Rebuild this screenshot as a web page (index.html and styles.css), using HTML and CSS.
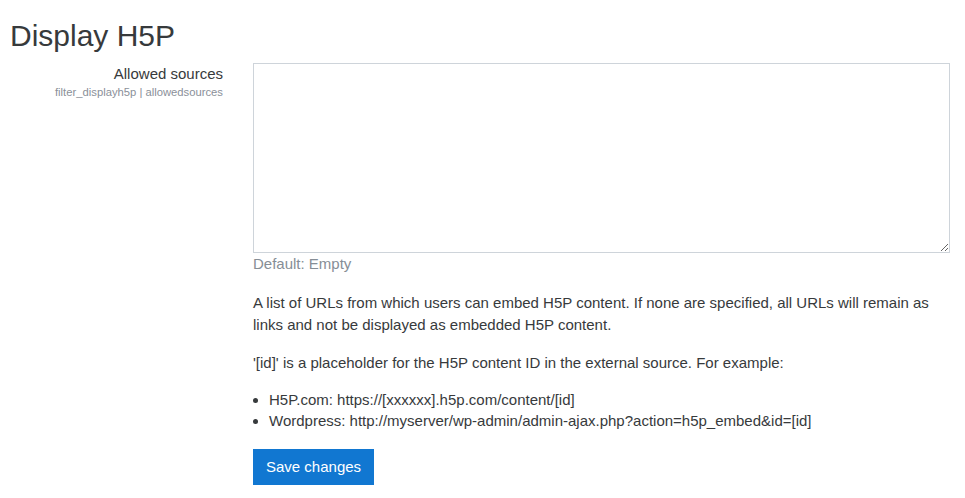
FILE: index.html
```html
<!DOCTYPE html>
<html>
  <head>
    <meta name="viewport" content="width=device-width, initial-scale=1.0">
    <title>Display H5P</title>
    <link rel="stylesheet" href="styles.css">
  </head>
  <body>
    <div class="page">
      <h2>Display H5P</h2>
      <form class="setting">
        <div class="setting-label">
          <label for="allowedsources">Allowed sources</label>
          <span class="shortname">filter_displayh5p | allowedsources</span>
        </div>
        <div class="setting-body">
          <textarea id="allowedsources" rows="8"></textarea>
          <div class="default">Default: Empty</div>
          <div class="description">
            <p>A list of URLs from which users can embed H5P content. If none are specified, all URLs will remain as links and not be displayed as embedded H5P content.</p>
            <p>'[id]' is a placeholder for the H5P content ID in the external source. For example:</p>
            <ul>
              <li>H5P.com: https://[xxxxxx].h5p.com/content/[id]</li>
              <li>Wordpress: http://myserver/wp-admin/admin-ajax.php?action=h5p_embed&amp;id=[id]</li>
            </ul>
          </div>
          <button type="button">Save changes</button>
        </div>
      </form>
    </div>
  </body>
</html>
```

FILE: styles.css
```css
body {
  font-family: "Liberation Sans", Arial, sans-serif;
  font-size: 15px;
  line-height: 1.5;
  color: #373a3c;
  margin: 0;
  padding: 0;
  background: #fff;
}
.page {
  padding: 18px 15px 0 10px;
}
h2 {
  font-size: 30px;
  font-weight: normal;
  line-height: 1.2;
  margin: 0 0 9px 0;
}
.setting {
  display: flex;
}
.setting-label {
  width: 213px;
  flex: none;
  padding-right: 30px;
  text-align: right;
}
.setting-label label {
  display: block;
}
.shortname {
  display: block;
  font-size: 11.25px;
  line-height: 1.2;
  color: #8a9099;
}
.setting-body {
  flex: 1;
}
textarea {
  display: block;
  box-sizing: border-box;
  width: 100%;
  height: 190px;
  margin: 0;
  border: 1px solid #ced4da;
  border-radius: 0;
  font-family: inherit;
  font-size: 15px;
}
.default {
  color: #868e96;
  margin-bottom: 16px;
}
p {
  margin: 0 0 15px 0;
}
ul {
  margin: 0 0 15px 0;
  padding-left: 16px;
}
li {
  line-height: 21px;
}
button {
  font-family: inherit;
  font-size: 15px;
  line-height: 22px;
  padding: 6px 12px;
  margin-top: 3px;
  border: 1px solid #1177d1;
  border-radius: 0;
  background-color: #1177d1;
  color: #fff;
  cursor: pointer;
}
```
